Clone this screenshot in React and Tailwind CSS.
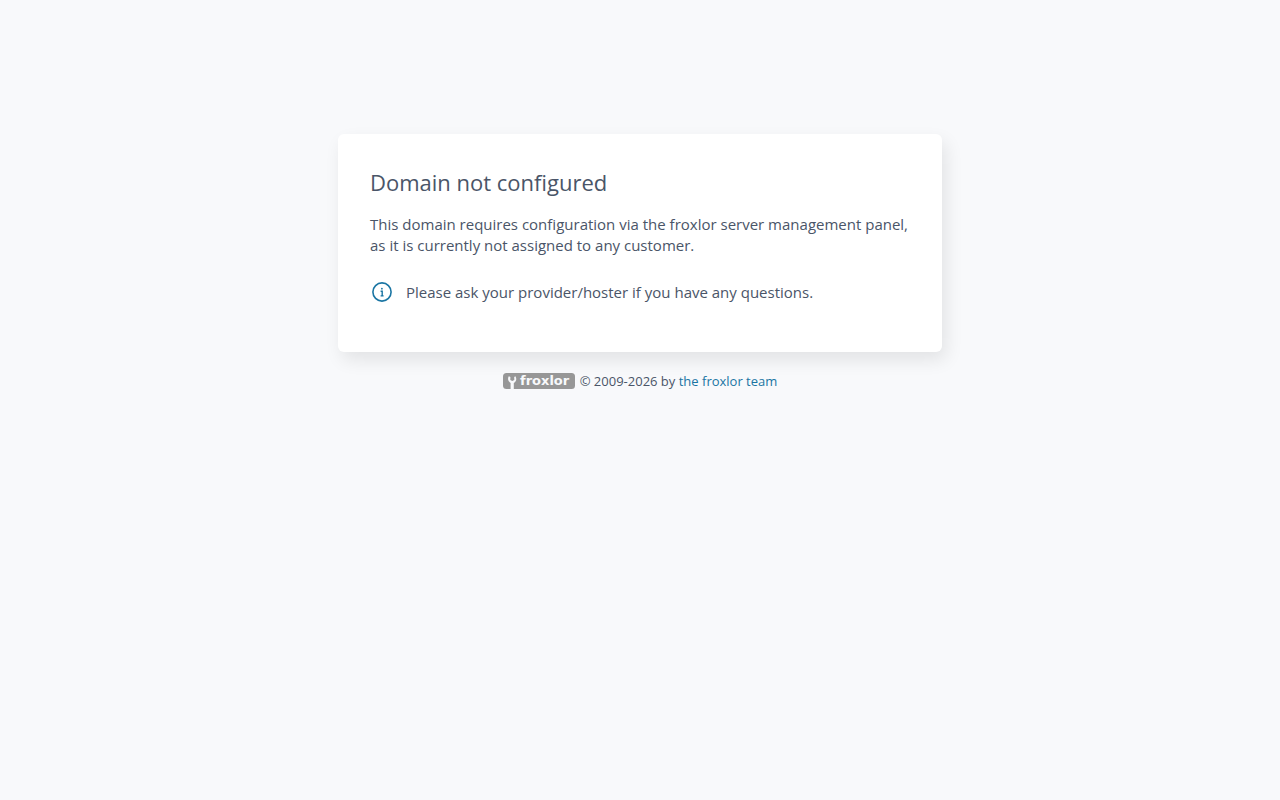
import React from "react";

function InfoIcon() {
  return (
    <svg viewBox="0 0 24 24" className="size-6 shrink-0" fill="none" aria-hidden="true">
      <circle cx="12" cy="12" r="9.1" stroke="#1a75a3" strokeWidth="1.6" />
      <circle cx="11.9" cy="8.7" r="0.9" fill="#1a75a3" />
      <path d="M10.6 11.3h1.6v4.4M10.6 15.9h3" stroke="#1a75a3" strokeWidth="1.4" />
    </svg>
  );
}

function Logo() {
  return (
    <svg viewBox="0 0 72 16" className="h-4 w-[72px]" role="img" aria-label="froxlor">
      <rect width="72" height="16" rx="3.5" fill="#979797" />
      <path
        d="M5.8 3.2C4.4 5.6 5 8.6 7.6 10V16h3.2V10c2.6-1.4 3.2-4.4 1.6-6.8l-1.2.8.1 3-2 1.1-2-1.1.1-3z"
        fill="#f8f9fb"
      />
      <text
        x="17"
        y="12"
        fill="#f8f9fb"
        fontFamily="DejaVu Sans, sans-serif"
        fontWeight="700"
        fontSize="13"
      >
        froxlor
      </text>
    </svg>
  );
}

export default function App() {
  return (
    <div className="min-h-screen bg-[#f8f9fb] px-4 pt-[134px] font-['Open_Sans',sans-serif] text-[#4a5568]">
      <main className="mx-auto max-w-[604px] rounded-md bg-white p-8 shadow-[4px_8px_18px_rgba(0,0,0,0.09)]">
        <h1 className="text-[22px] leading-8">Domain not configured</h1>
        <p className="mt-4 text-[15px] leading-[21px]">
          This domain requires configuration via the froxlor server management panel,
          as it is currently not assigned to any customer.
        </p>
        <div className="mt-6 mb-4 flex items-center gap-3">
          <InfoIcon />
          <p className="text-[15px] leading-[21px]">
            Please ask your provider/hoster if you have any questions.
          </p>
        </div>
      </main>
      <footer className="mt-5 flex items-center justify-center gap-[5px] text-[13px] leading-[18px]">
        <Logo />
        <p>
          © 2009-2026 by{" "}
          <a href="https://www.froxlor.org/" className="text-[#1a75a3]">
            the froxlor team
          </a>
        </p>
      </footer>
    </div>
  );
}
